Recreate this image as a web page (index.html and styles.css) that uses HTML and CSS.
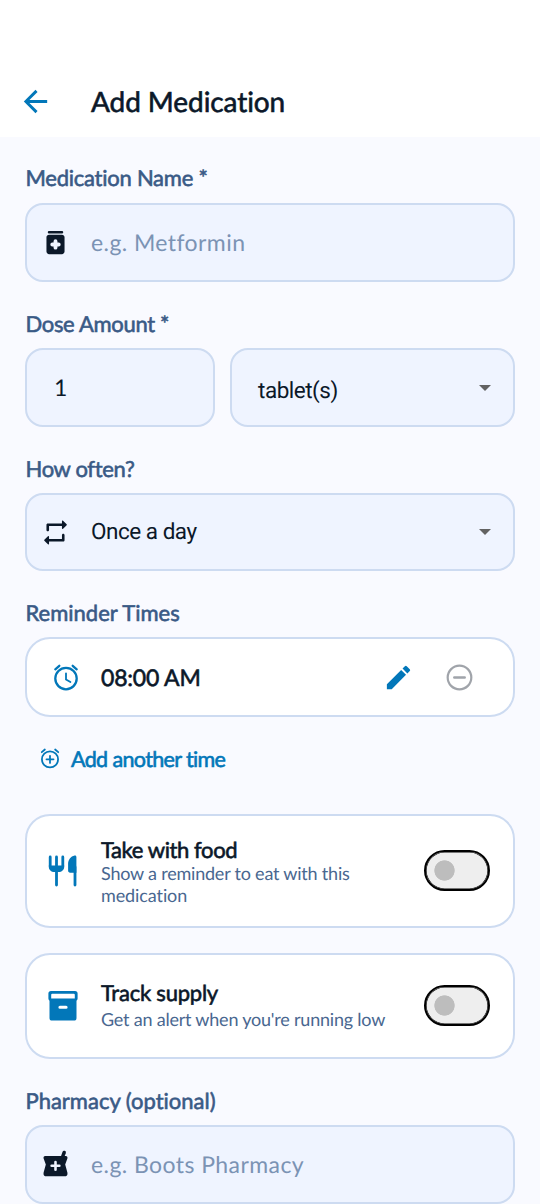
FILE: index.html
```html
<!DOCTYPE html>
<html lang="en">
<head>
<meta charset="utf-8">
<title>Add Medication</title>
<link rel="stylesheet" href="styles.css">
</head>
<body>
<header class="header">
  <svg class="back" viewBox="0 0 24 24"><path d="M20 11H7.83l5.59-5.59L12 4l-8 8 8 8 1.41-1.41L7.83 13H20z"/></svg>
  <h1 class="title"><span>Add Medication</span></h1>
</header>
<main class="form">
  <div class="label label-first"><span class="t-name">Medication Name *</span></div>
  <div class="field">
    <svg class="icon" viewBox="0 0 24 24"><path d="M7 3h10a1 1 0 0 1 0 2H7a1 1 0 0 1 0-2zM17 6H7c-1.1 0-2 .9-2 2v11c0 1.1.9 2 2 2h10c1.1 0 2-.9 2-2V8c0-1.1-.9-2-2-2zm-2.5 9h-1v1a1.5 1.5 0 0 1-3 0v-1h-1a1.5 1.5 0 0 1 0-3h1v-1a1.5 1.5 0 0 1 3 0v1h1a1.5 1.5 0 0 1 0 3z"/></svg>
    <span class="placeholder t-metformin">e.g. Metformin</span>
  </div>
  <div class="label label-mid"><span class="t-dose">Dose Amount *</span></div>
  <div class="dose">
    <div class="field amount"><span class="number">1</span></div>
    <div class="field unit"><span class="value t-tablet">tablet(s)</span><i class="caret"></i></div>
  </div>
  <div class="label label-mid"><span class="t-often">How often?</span></div>
  <div class="field often">
    <svg class="icon" viewBox="0 0 24 24"><path d="M7 7h10v1.8c0 .45.54.67.85.35l2.79-2.79c.2-.2.2-.51 0-.71l-2.79-2.79a.5.5 0 0 0-.85.35V5H6c-.55 0-1 .45-1 1v4c0 .55.45 1 1 1s1-.45 1-1V7zm10 10H7v-1.8c0-.45-.54-.67-.85-.35l-2.79 2.79c-.2.2-.2.51 0 .71l2.79 2.79a.5.5 0 0 0 .85-.35V19h11c.55 0 1-.45 1-1v-4c0-.55-.45-1-1-1s-1 .45-1 1v3z"/></svg>
    <span class="value t-once">Once a day</span><i class="caret"></i>
  </div>
  <div class="label label-times"><span class="t-times">Reminder Times</span></div>
  <div class="card reminder">
    <svg class="alarm" viewBox="0 0 26 27"><g class="line"><circle cx="13" cy="14.6" r="10.7"/><path d="M13 9.3v6.1l4.4 2.7" class="thin"/><path d="M2.3 5.3l4-3.5M23.7 5.3l-4-3.5"/></g></svg>
    <span class="time"><span>08:00 AM</span></span>
    <svg class="edit" viewBox="0 0 24 24"><path d="M3 17.25V21h3.75L17.81 9.94l-3.75-3.75L3 17.25zM20.71 7.04a1 1 0 0 0 0-1.41l-2.34-2.34a1 1 0 0 0-1.41 0l-1.83 1.83 3.75 3.75 1.83-1.83z"/></svg>
    <svg class="remove" viewBox="0 0 24 24"><path d="M8 11a1 1 0 0 0 0 2h8a1 1 0 0 0 0-2zM12 2a10 10 0 1 0 0 20 10 10 0 0 0 0-20zm0 18.3a8.3 8.3 0 1 1 0-16.6 8.3 8.3 0 0 1 0 16.6z"/></svg>
  </div>
  <div class="add">
    <svg class="add-icon" viewBox="0 0 26 27"><g class="line"><circle cx="13" cy="14.6" r="10.5"/><path d="M13 10v9.2M8.4 14.6h9.2"/><path d="M2.3 5.3l4-3.5M23.7 5.3l-4-3.5"/></g></svg>
    <span class="t-add">Add another time</span>
  </div>
  <div class="card food">
    <svg class="card-icon" viewBox="0 0 30 32"><path d="M2.2 2v9.2M8.5 2v13M14.8 2v9.2M8.5 15v15M27 12v18" fill="none" stroke="currentColor" stroke-width="2.8" stroke-linecap="round"/><path d="M.8 10.5h15.4v1.2c0 3.2-2.5 5.3-5.6 5.3H6.4c-3.1 0-5.6-2.1-5.6-5.3zM28.4 2v15.7h-6.2c-1.4 0-2.1-.8-2.1-2.2V9c0-4 2.6-7.8 6.5-8.5 1.1-.2 1.8.4 1.8 1.5z"/></svg>
    <div class="copy"><span class="card-title t-food">Take with food</span><span class="sub"><span class="t-show">Show a reminder to eat with this</span><br><span class="t-med">medication</span></span></div>
    <span class="toggle"></span>
  </div>
  <div class="card supply">
    <svg class="card-icon" viewBox="0 0 30 32"><path fill-rule="evenodd" d="M3 1h24a2.6 2.6 0 0 1 2.6 2.6v5a2.6 2.6 0 0 1-1.1 2.1V28a2.6 2.6 0 0 1-2.6 2.6H4.1A2.6 2.6 0 0 1 1.5 28V10.7A2.6 2.6 0 0 1 .4 8.6v-5A2.6 2.6 0 0 1 3 1zM4.2 3.7a1 1 0 0 0-1 1V8.500h23.600V4.700a1 1 0 0 0-1-1zM11.900 15.700a1.500 1.500 0 0 0 0 3h6.200a1.500 1.500 0 0 0 0-3z"/></svg>
    <div class="copy"><span class="card-title t-supply">Track supply</span><span class="sub"><span class="t-alert">Get an alert when you're running low</span></span></div>
    <span class="toggle"></span>
  </div>
  <div class="label label-pharmacy"><span class="t-pharmacy">Pharmacy (optional)</span></div>
  <div class="field">
    <svg class="icon" viewBox="0 0 24 24"><path d="M20 5.500h-.9l.9-2.300a1.350 1.350 0 0 0-2.600-.9L16.300 5.500H4c-1 0-1.500 1-1.200 1.900L4.500 12l-1.700 6.200C2.500 19.800 3 21 4 21h16c1 0 1.500-1.200 1.200-2.800L19.500 12l1.700-4.600C21.500 6.500 21 5.500 20 5.500zM15 14h-2v2a1 1 0 0 1-2 0v-2H9a1 1 0 0 1 0-2h2v-2a1 1 0 0 1 2 0v2h2a1 1 0 0 1 0 2z"/></svg>
    <span class="placeholder t-boots">e.g. Boots Pharmacy</span>
  </div>
</main>
</body>
</html>
```
FILE: styles.css
```css
* { box-sizing: border-box; }
html, body { margin: 0; height: 1204px; overflow: hidden; }
body { width: 540px; background: #f9faff; color: #0b1829; font-family: Lato, sans-serif; font-size: 22px; font-variant-ligatures: none; text-rendering: geometricPrecision; display: flex; flex-direction: column; }
svg { display: block; fill: currentColor; flex: none; }
span { white-space: nowrap; }
.header { height: 137px; flex: none; background: #fff; display: flex; align-items: center; padding: 65px 0 0 18px; }
.back { width: 35px; height: 35px; color: #0277b9; }
.title { margin: 0 0 0 38px; font-size: 28px; line-height: 36px; letter-spacing: -0.080px; }
.title, .label, .time, .add, .card-title { font-weight: 400; -webkit-text-stroke: 0.6px currentColor; }
.form { padding: 0 25.500px 0 25px; display: flex; flex-direction: column; flex: none; }
.label { height: 66px; padding: 28px 0 0 0.500px; font-size: 22px; line-height: 26px; color: #3a5a86; flex: none; }
.label-mid { padding-top: 29px; }
.t-name { letter-spacing: -0.250px; }
.t-dose, .t-often { letter-spacing: -0.320px; }
.field { height: 79px; flex: none; border: 2px solid #cddbf1; border-radius: 18px; background: #eff4ff; display: flex; align-items: center; padding: 0 21px 0 13px; }
.icon { width: 31px; height: 31px; margin-right: 20px; }
.placeholder { color: #7b93b4; font-size: 23px; letter-spacing: 0.420px; padding-bottom: 1px; }
.dose { display: flex; gap: 15.500px; }
.amount { width: 189.500px; padding-left: 27px; }
.unit { flex: 1; padding-left: 26px; }
.number { font-size: 23px; padding-bottom: 2px; }
.value { font-family: Roboto, sans-serif; font-size: 22.500px; flex: 1; letter-spacing: -0.480px; }
.unit .value { padding-top: 6px; }
.often { height: 78px; }
.caret { width: 0; height: 0; border: 6.500px solid transparent; border-top-color: #626262; border-bottom: 0; margin-right: 1px; }
.label-times { padding-top: 29px; }
.card { flex: none; border: 2px solid #cddbf1; border-radius: 25px; background: #fff; display: flex; align-items: center; padding: 0 23px 0 21px; }
.reminder { height: 80px; padding-left: 26px; padding-right: 38px; }
.line { fill: none; stroke: currentColor; stroke-width: 2.300; stroke-linecap: round; }
.thin { stroke-width: 1.800; }
.alarm { width: 26px; height: 27px; color: #0277b9; }
.time { flex: 1; margin-left: 22px; font-size: 23px; letter-spacing: -0.200px; }
.edit { width: 31px; height: 31px; color: #0277b9; margin-right: 30px; }
.remove { width: 31px; height: 31px; color: #a0a4aa; }
.add { height: 83px; margin: 0 0 14px 15px; flex: none; display: flex; align-items: center; color: #0277b9; }
.add-icon { width: 20px; height: 21px; margin-right: 11px; }
.t-add { font-size: 21.500px; letter-spacing: -0.630px; }
.food { height: 113.500px; }
.supply { height: 105.500px; margin-top: 25.500px; }
.card-icon { width: 30px; height: 32px; color: #0277b9; }
.copy { flex: 1; margin-left: 23px; display: flex; flex-direction: column; align-items: flex-start; }
.card-title { line-height: 26px; }
.t-food { letter-spacing: -0.400px; line-height: 24px; padding-top: 2px; }
.t-supply { letter-spacing: -0.220px; }
.sub { color: #496790; font-size: 18px; line-height: 22px; letter-spacing: -0.210px; }
.t-med { letter-spacing: -0.100px; }
.supply .sub { line-height: 26px; }
.toggle { width: 66px; height: 41px; border: 2px solid #000; box-shadow: inset 0 0 0 0.600px #000; border-radius: 21px; background: radial-gradient(circle at 18.500px 50%, #bdbdbd 9.800px, #eee 10.500px); }
.label-pharmacy { height: 66.500px; padding-top: 29px; }
```
